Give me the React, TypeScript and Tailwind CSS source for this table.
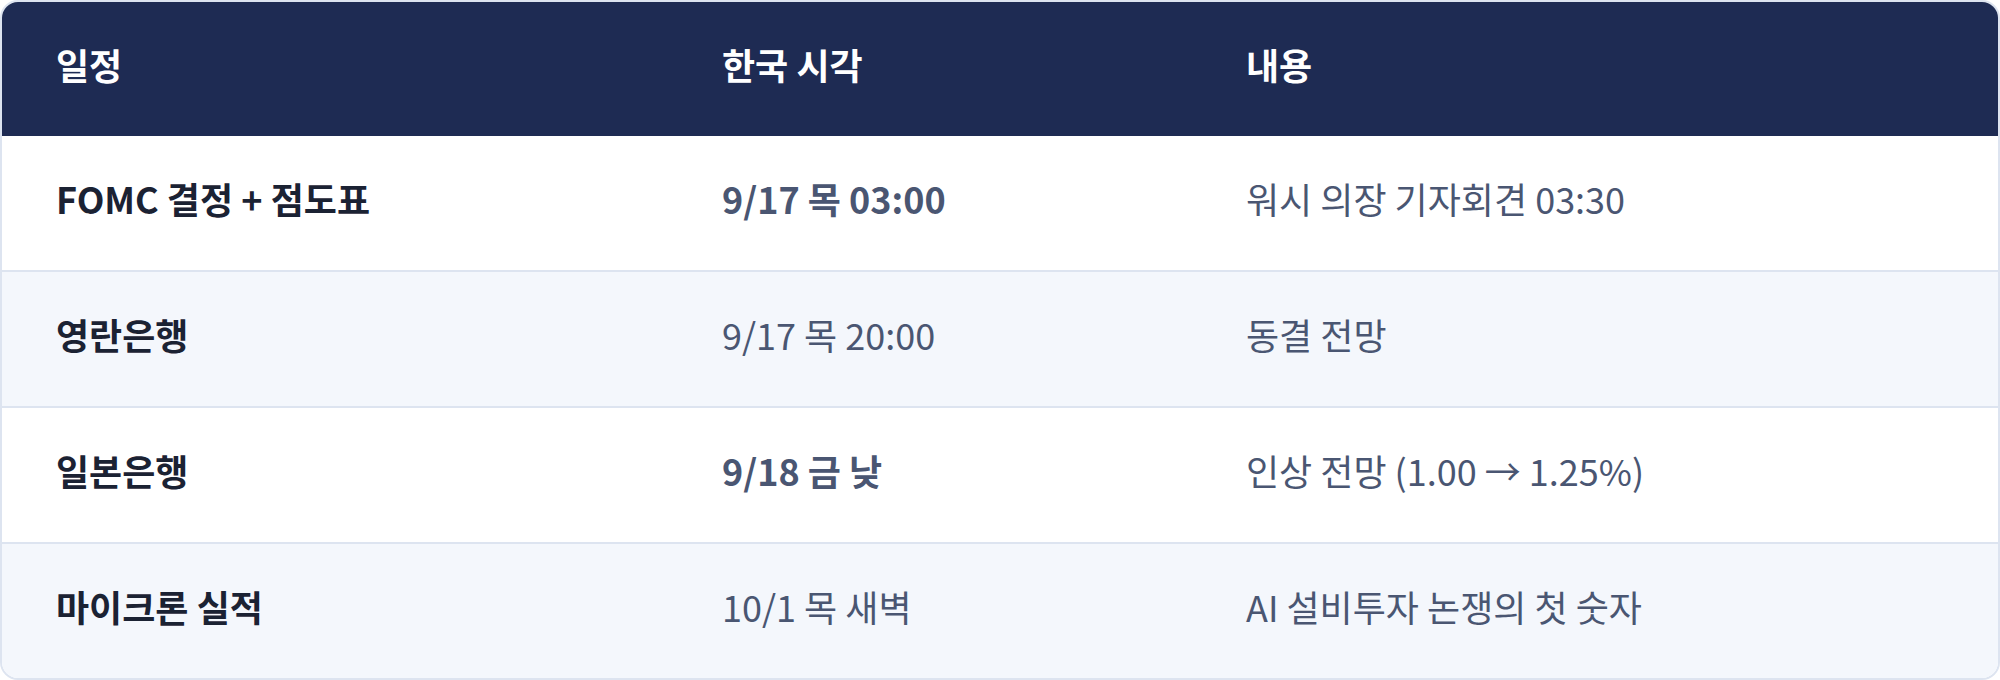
import React from "react";

const rows = [
  { a: "FOMC 결정 + 점도표", b: "9/17 목 03:00", c: "워시 의장 기자회견 03:30", bold: true },
  { a: "영란은행", b: "9/17 목 20:00", c: "동결 전망", bold: false },
  { a: "일본은행", b: "9/18 금 낮", c: "인상 전망 (1.00 → 1.25%)", bold: true },
  { a: "마이크론 실적", b: "10/1 목 새벽", c: "AI 설비투자 논쟁의 첫 숫자", bold: false },
];

export default function App() {
  return (
    <div
      className="w-[2000px] h-[680px] bg-white"
      style={{ fontFamily: '"Noto Sans CJK KR", "Noto Sans", sans-serif' }}
    >
      <div className="w-full h-full border-2 border-[#dde4f0] rounded-[18px] overflow-hidden flex flex-col">
        <div className="flex h-[134px] pb-[10px] bg-[#1e2b53] text-white font-bold text-[36px] leading-none items-center">
          <div className="w-[666px] pl-[54px]">일정</div>
          <div className="w-[524px] pl-[54px]">한국 시각</div>
          <div className="flex-1 pl-[54px]">내용</div>
        </div>
        {rows.map((r, i) => (
          <div
            key={i}
            className={
              "flex flex-1 items-center pb-[10px] text-[36px] leading-none " +
              (i > 0 ? "border-t-2 border-[#dde4f0] " : "") +
              (i % 2 === 1 ? "bg-[#f4f7fc]" : "bg-white")
            }
          >
            <div className="w-[666px] pl-[54px] font-bold text-[#1b2233]">{r.a}</div>
            <div className={"w-[524px] pl-[54px] text-[#4a5672] " + (r.bold ? "font-bold" : "font-normal")}>{r.b}</div>
            <div className="flex-1 pl-[54px] text-[#4a5672]">{r.c}</div>
          </div>
        ))}
      </div>
    </div>
  );
}
